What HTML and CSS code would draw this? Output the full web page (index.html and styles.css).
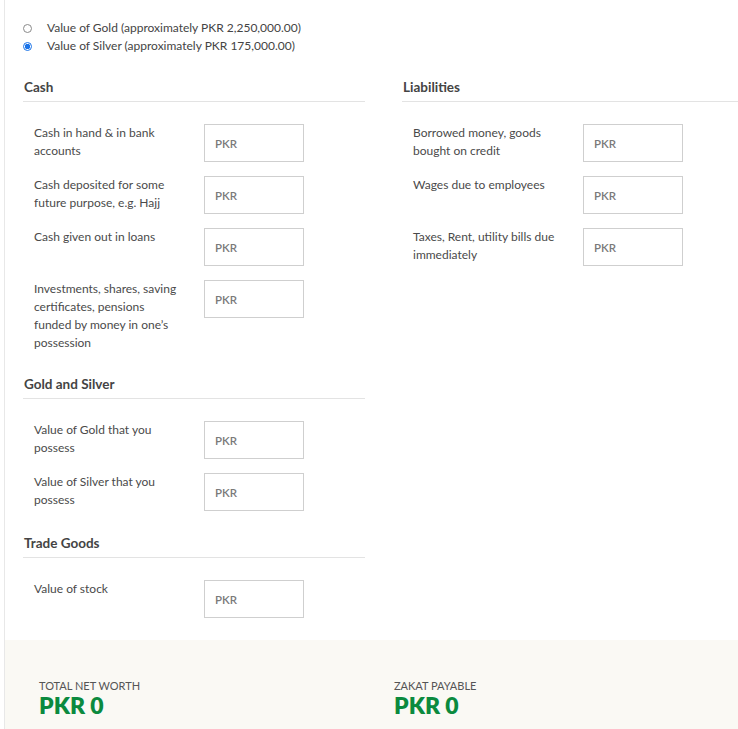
FILE: index.html
```html
<!DOCTYPE html>
<html lang="en">
<head>
<meta charset="utf-8">
<title>Zakat Calculator</title>
<link rel="stylesheet" href="styles.css">
</head>
<body>
<div class="page">
  <div class="radios">
    <label class="radio"><span class="dot"></span>Value of Gold (approximately PKR 2,250,000.00)</label>
    <label class="radio"><span class="dot checked"></span>Value of Silver (approximately PKR 175,000.00)</label>
  </div>
  <div class="columns">
    <div class="col">
      <h3 class="heading">Cash</h3>
      <div class="row"><div class="lbl">Cash in hand &amp; in bank accounts</div><div class="input">PKR</div></div>
      <div class="row"><div class="lbl">Cash deposited for some future purpose, e.g. Hajj</div><div class="input">PKR</div></div>
      <div class="row"><div class="lbl">Cash given out in loans</div><div class="input">PKR</div></div>
      <div class="row"><div class="lbl">Investments, shares, saving certificates, pensions funded by money in one’s possession</div><div class="input">PKR</div></div>
      <h3 class="heading">Gold and Silver</h3>
      <div class="row"><div class="lbl">Value of Gold that you possess</div><div class="input">PKR</div></div>
      <div class="row"><div class="lbl">Value of Silver that you possess</div><div class="input">PKR</div></div>
      <h3 class="heading">Trade Goods</h3>
      <div class="row"><div class="lbl">Value of stock</div><div class="input">PKR</div></div>
    </div>
    <div class="col">
      <h3 class="heading">Liabilities</h3>
      <div class="row"><div class="lbl">Borrowed money, goods bought on credit</div><div class="input">PKR</div></div>
      <div class="row"><div class="lbl">Wages due to employees</div><div class="input">PKR</div></div>
      <div class="row"><div class="lbl">Taxes, Rent, utility bills due immediately</div><div class="input">PKR</div></div>
    </div>
  </div>
  <div class="totals">
    <div class="total">
      <div class="total-label">TOTAL NET WORTH</div>
      <div class="total-value">PKR 0</div>
    </div>
    <div class="total">
      <div class="total-label">ZAKAT PAYABLE</div>
      <div class="total-value">PKR 0</div>
    </div>
  </div>
</div>
</body>
</html>
```
FILE: styles.css
```css
html, body {
  margin: 0;
  padding: 0;
  background: #fff;
  overflow: hidden;
}
body {
  font-family: Lato, "Open Sans", Arial, sans-serif;
  color: #4a4a4a;
  font-size: 12px;
}
.page {
  margin-left: 4px;
  border-left: 1px solid #e8e8e8;
  min-height: 729px;
  width: 760px;
}
.radios {
  padding: 19px 0 0 18px;
  display: flex;
  flex-direction: column;
}
.radio {
  display: flex;
  align-items: center;
  height: 18px;
  line-height: 18px;
  color: #444;
}
.dot {
  width: 7px;
  height: 7px;
  border: 1px solid #8a8a8a;
  border-radius: 50%;
  margin-right: 15px;
  box-sizing: content-box;
}
.dot.checked {
  border-color: #1a73e8;
  background: radial-gradient(circle, #1a73e8 0 2.5px, #fff 3px);
}
.columns {
  display: grid;
  grid-template-columns: 342px 342px;
  column-gap: 37px;
  padding-left: 18px;
  padding-top: 14px;
}
.heading {
  margin: 0 0 22px;
  padding: 9px 0 5px 1px;
  font-size: 13.5px;
  line-height: 18px;
  font-weight: 700;
  color: #444;
  border-bottom: 1px solid #e3e3e3;
}
.row {
  display: flex;
  align-items: flex-start;
  margin-bottom: 14px;
}
.lbl {
  width: 148px;
  padding-left: 11px;
  margin-right: 22px;
  line-height: 18px;
  font-size: 12px;
  color: #4a4a4a;
}
.input {
  border: 1px solid #cfcfcf;
  display: flex;
  align-items: center;
  padding-left: 10px;
  box-sizing: border-box;
  width: 100px;
  height: 38px;
  font-size: 11.5px;
  font-weight: 600;
  color: #7a7a7a;
}
.totals {
  margin-top: 8px;
  background: #faf9f4;
  display: grid;
  grid-template-columns: 355px 355px;
  padding: 39px 0 40px 34px;
}
.total-label {
  font-size: 11px;
  line-height: 14px;
  color: #555;
}
.total-value {
  font-size: 23px;
  line-height: 24px;
  font-weight: 800;
  color: #0b8a3e;
}
```
